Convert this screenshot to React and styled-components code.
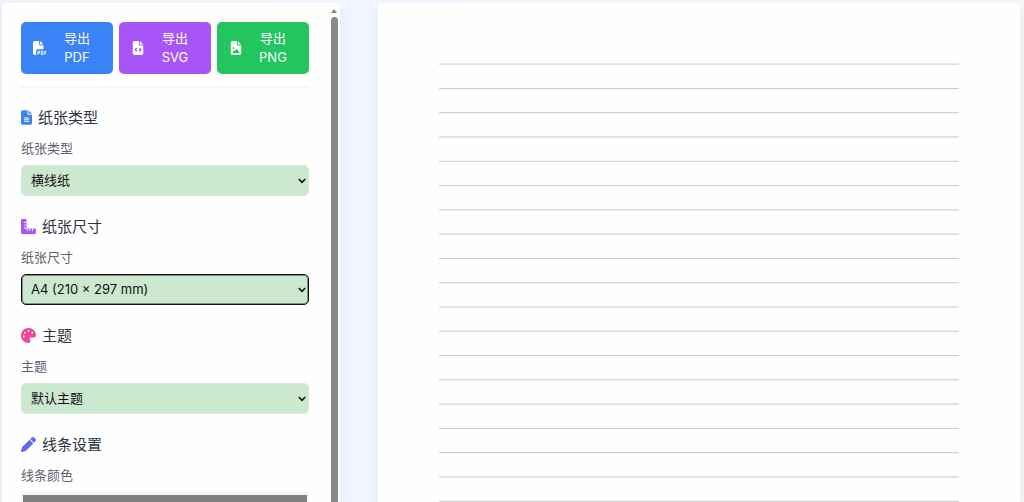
import React, { useState } from "react";
import styled, { createGlobalStyle } from "styled-components";
import {
  FaFilePdf,
  FaFileCode,
  FaFileImage,
  FaFileLines,
  FaRulerCombined,
  FaPalette,
  FaPen
} from "react-icons/fa6";

const GlobalStyle = createGlobalStyle`
  *, *::before, *::after {
    box-sizing: border-box;
  }

  body {
    margin: 0;
    overflow: hidden;
    font-family: Inter, "Noto Sans CJK SC", sans-serif;
    background: #f1f4fe;
  }
`;

const Page = styled.main`
  display: grid;
  grid-template-columns: minmax(0, 1fr) minmax(0, 1.9fr);
  gap: 38px;
  height: 100vh;
  padding: 3px 4px 0 2px;
  background: linear-gradient(to right, #f2f2fc, #f1f5ff 40%, #f4f5fa);
`;

const Panel = styled.aside`
  display: flex;
  min-height: 0;
  background: #fefefe;
  border-radius: 4px 4px 0 0;
  box-shadow: 0 6px 12px rgba(30, 41, 90, 0.06);
`;

const Settings = styled.div`
  flex: 1;
  min-width: 0;
  overflow: hidden;
  padding: 19px 22px 0 19px;
`;

const ScrollTrack = styled.div`
  display: flex;
  flex-direction: column;
  align-items: center;
  gap: 4px;
  width: 7px;
  margin-right: 2px;
  padding-top: 6px;
`;

const ScrollArrow = styled.span`
  border: 3px solid transparent;
  border-top: 0;
  border-bottom: 4px solid #858585;
`;

const ScrollThumb = styled.span`
  flex: 1;
  width: 100%;
  background: #8a8a8a;
  border-radius: 4px 4px 0 0;
`;

const Toolbar = styled.div`
  display: grid;
  grid-template-columns: repeat(3, 1fr);
  gap: 6px;
  margin-bottom: 18px;
  padding-bottom: 12px;
  border-bottom: 2px solid #f5f6f7;
`;

const ExportButton = styled.button`
  display: flex;
  align-items: center;
  height: 52px;
  padding: 0 12px;
  border: none;
  border-radius: 5px;
  background: ${props => props.$color};
  color: white;
  font: inherit;
  font-size: 13px;
  line-height: 19px;
  cursor: pointer;

  svg {
    flex: none;
    width: 14px;
    height: 14px;
  }

  span {
    flex: 1;
    padding-left: 6px;
  }
`;

const Section = styled.section`
  margin-bottom: 19px;
`;

const SectionTitle = styled.h2`
  display: flex;
  align-items: center;
  gap: 6px;
  height: 24px;
  margin: 0 0 8px;
  color: #2b3544;
  font-size: 15px;
  font-weight: 400;
  line-height: 24px;

  svg {
    width: ${props => (props.$narrow ? "11px" : "15px")};
    height: 15px;
    margin-bottom: 2px;
    color: ${props => props.$color};
  }
`;

const Label = styled.label`
  display: block;
  margin-bottom: 7px;
  color: #5b6470;
  font-size: 13px;
  line-height: 20px;
`;

const SelectBox = styled.div`
  display: grid;
  align-items: center;

  > * {
    grid-area: 1 / 1;
  }

  svg {
    justify-self: end;
    margin-right: 3px;
    pointer-events: none;
  }
`;

const Select = styled.select`
  appearance: none;
  width: 100%;
  height: 31px;
  padding: 0 20px 1px 9px;
  border: 1px solid #d5e9d9;
  border-radius: 5px;
  outline: none;
  background: #cce8cf;
  color: #111;
  font: inherit;
  font-size: 13px;

  ${props => props.$active && `
    border-color: #101010;
    box-shadow: inset 0 0 0 1px rgba(16, 16, 16, 0.4);
  `}
`;

const ColorInput = styled.input`
  display: block;
  width: 100%;
  height: 32px;
  padding: 3px 2px;
  border: none;
  background: #f3f4f6;

  &::-webkit-color-swatch-wrapper {
    padding: 0;
  }

  &::-webkit-color-swatch {
    border: none;
  }
`;

const Preview = styled.section`
  min-height: 0;
  overflow: hidden;
  background: #fefefe;
  border-radius: 4px 4px 0 0;
  box-shadow: 0 6px 14px rgba(30, 41, 90, 0.06);

  svg {
    display: block;
    width: 100%;
    height: auto;
  }
`;

const exportTypes = [
  { name: "PDF", color: "#3b82f6", Icon: FaFilePdf },
  { name: "SVG", color: "#a855f7", Icon: FaFileCode },
  { name: "PNG", color: "#22c55e", Icon: FaFileImage }
];

const paperFields = [
  {
    id: "paper-type",
    title: "纸张类型",
    color: "#3b82f6",
    Icon: FaFileLines,
    narrow: true,
    options: ["横线纸", "方格纸", "点阵纸"]
  },
  {
    id: "paper-size",
    title: "纸张尺寸",
    color: "#a855f7",
    Icon: FaRulerCombined,
    options: ["A4 (210 × 297 mm)", "A5 (148 × 210 mm)"],
    active: true
  },
  {
    id: "theme",
    title: "主题",
    color: "#ec4899",
    Icon: FaPalette,
    options: ["默认主题"]
  }
];

// A4 at 96 dpi
const PAPER_WIDTH = 794;
const PAPER_HEIGHT = 1123;
const MARGIN = 75.6;
const LINE_GAP = 30.03;

function LinedPaper({ color }) {
  const count = Math.floor((PAPER_HEIGHT - MARGIN * 2) / LINE_GAP) + 1;

  return (
    <svg viewBox={`0 0 ${PAPER_WIDTH} ${PAPER_HEIGHT}`} aria-hidden="true">
      {Array.from({ length: count }, (_, i) => (
        <line
          key={i}
          x1={MARGIN}
          x2={PAPER_WIDTH - MARGIN}
          y1={MARGIN + i * LINE_GAP}
          y2={MARGIN + i * LINE_GAP}
          stroke={color}
          strokeOpacity="0.45"
          strokeWidth="1.2"
        />
      ))}
    </svg>
  );
}

function Chevron() {
  return (
    <svg width="8" height="6" viewBox="0 0 8 6" aria-hidden="true">
      <path d="M0.8 1 L4 4.3 L7.2 1" fill="none" stroke="#111" strokeWidth="1.6" />
    </svg>
  );
}

function App() {
  const [lineColor, setLineColor] = useState("#808080");

  return (
    <>
      <GlobalStyle />
      <Page>
        <Panel>
          <Settings>
            <Toolbar>
              {exportTypes.map(({ name, color, Icon }) => (
                <ExportButton key={name} type="button" $color={color}>
                  <Icon />
                  <span>导出<br />{name}</span>
                </ExportButton>
              ))}
            </Toolbar>

            {paperFields.map(({ id, title, color, Icon, narrow, options, active }) => (
              <Section key={id}>
                <SectionTitle $color={color} $narrow={narrow}>
                  <Icon />
                  {title}
                </SectionTitle>
                <Label htmlFor={id}>{title}</Label>
                <SelectBox>
                  <Select id={id} $active={active}>
                    {options.map(option => <option key={option}>{option}</option>)}
                  </Select>
                  <Chevron />
                </SelectBox>
              </Section>
            ))}

            <Section>
              <SectionTitle $color="#6366f1">
                <FaPen />
                线条设置
              </SectionTitle>
              <Label htmlFor="line-color">线条颜色</Label>
              <ColorInput
                id="line-color"
                type="color"
                value={lineColor}
                onChange={e => setLineColor(e.target.value)}
              />
            </Section>
          </Settings>
          <ScrollTrack>
            <ScrollArrow />
            <ScrollThumb />
          </ScrollTrack>
        </Panel>

        <Preview>
          <LinedPaper color={lineColor} />
        </Preview>
      </Page>
    </>
  );
}

export default App;
